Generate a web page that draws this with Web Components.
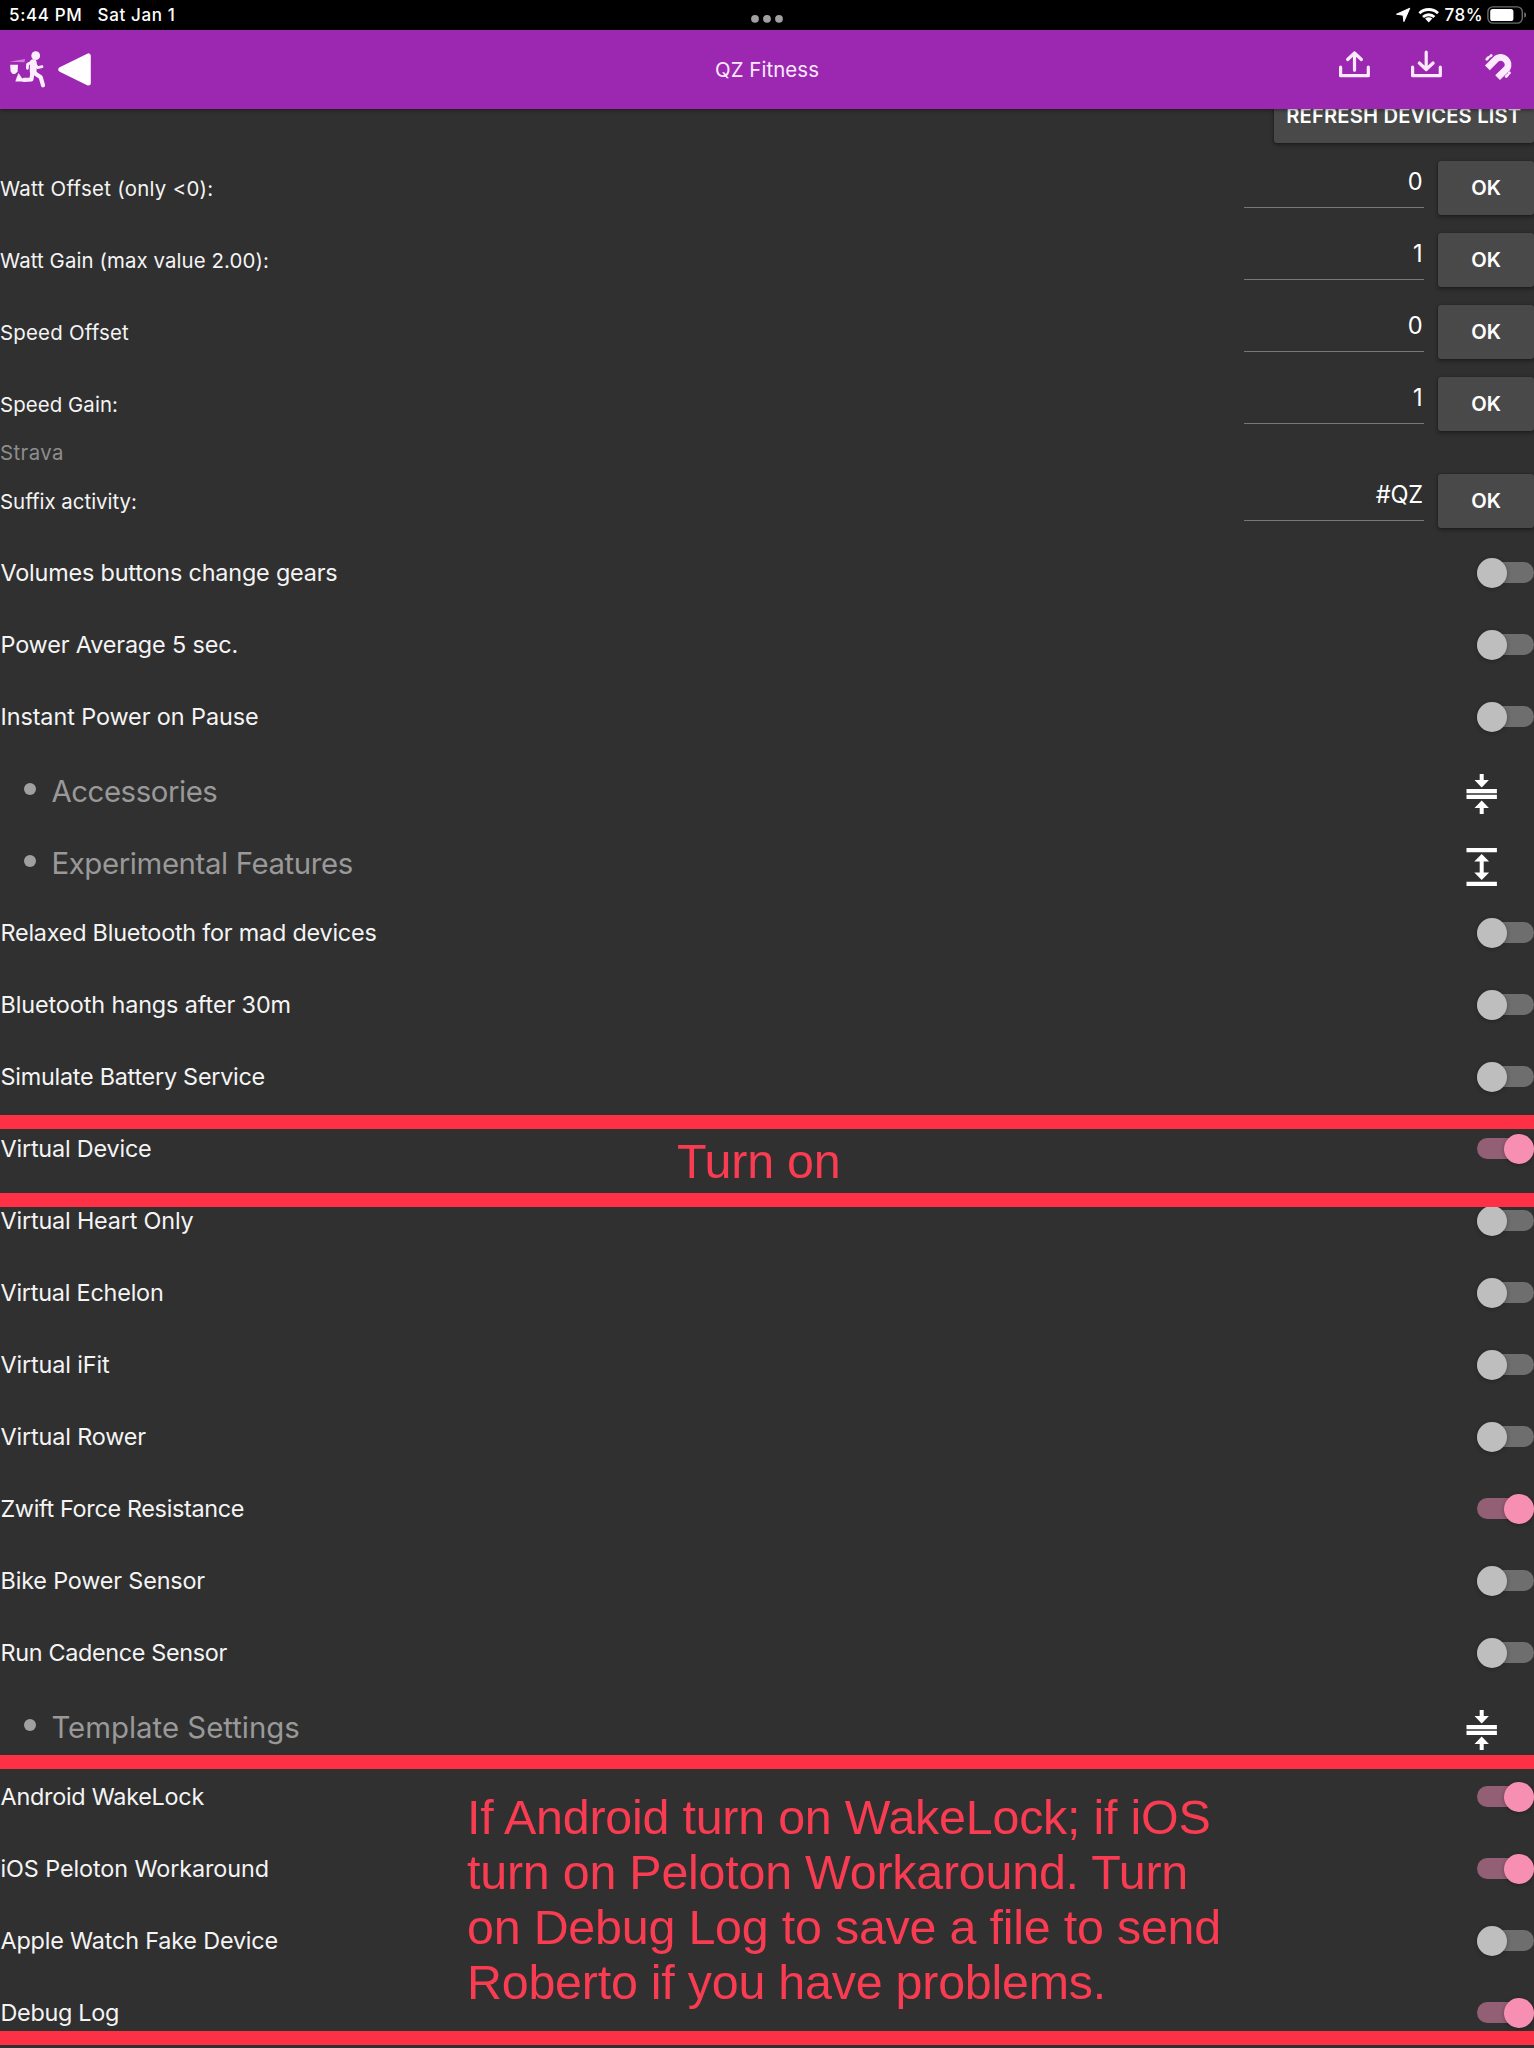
<!DOCTYPE html>
<html lang="en">
<head>
<meta charset="utf-8">
<title>QZ Fitness</title>
<style>
html,body{margin:0;background:#303030}
body{width:1534px;height:2048px;overflow:hidden;font-family:Inter,"Liberation Sans",sans-serif;color:#f4f4f4}
</style>
</head>
<body>
<qz-app></qz-app>
<script>
const define = (name, html, setup) => customElements.define(name, class extends HTMLElement {
  connectedCallback() {
    if (this.shadowRoot) return;
    const root = this.attachShadow({ mode: 'open' });
    root.innerHTML = html;
    if (setup) setup(this, root);
  }
});

/* Single line of text whose tracking is adjusted to a given advance width. */
define('fit-text', `<style>
  :host{display:block;white-space:nowrap;line-height:1.2}
  span{display:inline-block;white-space:pre}
</style><span></span>`, (el, root) => {
  const s = root.querySelector('span');
  const text = el.getAttribute('text');
  s.textContent = text;
  const w = parseFloat(el.getAttribute('w'));
  if (w) s.style.letterSpacing = ((w - s.getBoundingClientRect().width) / text.length).toFixed(4) + 'px';
});

define('status-bar', `<style>
  :host{display:flex;justify-content:space-between;height:30.3px;background:#000;color:#fff;font-size:17px;font-weight:500;position:relative;box-sizing:border-box;padding:0 8px 0 9px}
  .l{display:flex;gap:15px;padding-top:5px}
  .r{display:flex;align-items:flex-start}
  .r fit-text{margin:5px 4px 0 6px}
  svg{display:block}
  .dots{position:absolute;left:750px;top:14px}
</style>
<div class="l"><fit-text text="5:44 PM" w="73.5"></fit-text><fit-text text="Sat Jan 1" w="78"></fit-text></div>
<svg class="dots" width="34" height="10"><g fill="#a0a0a0"><circle cx="5" cy="4.8" r="3.9"/><circle cx="17" cy="4.8" r="3.9"/><circle cx="29" cy="4.8" r="3.9"/></g></svg>
<div class="r">
  <svg width="44" height="30" viewBox="1394.5 0 44 30"><path d="M1409.3 8.2 1396 14.2 1402.6 15.2 1403.4 21.6Z" fill="#fff" stroke="#fff" stroke-width="1" stroke-linejoin="round"/>
   <g fill="none" stroke="#fff" stroke-width="2.8"><path d="M1418.9 13.2a13.6 13.6 0 0 1 18.6 0"/><path d="M1422.5 17a8.4 8.4 0 0 1 11.4 0"/></g><path d="M1428.2 22.4l-3.6-3.8a5.2 5.2 0 0 1 7.2 0z" fill="#fff"/></svg>
  <fit-text text="78%" w="38.5"></fit-text>
  <svg width="39" height="30" viewBox="1487 0 39 30"><rect x="1487.9" y="6.9" width="34.4" height="16.2" rx="5" fill="none" stroke="#6c6c6c" stroke-width="1.4"/><rect x="1490.2" y="9" width="23.2" height="12" rx="2.6" fill="#fff"/><path d="M1524.3 12.3q2 .8 2 2.7t-2 2.7z" fill="#777"/></svg>
</div>`);

define('app-header', `<style>
  :host{display:grid;grid-template-columns:1fr auto 1fr;height:78.9px;background:#9c27b0;color:#fdeaff;position:relative;z-index:2;box-shadow:0 1px 4px rgba(0,0,0,.45)}
  svg{display:block}
  .r{justify-self:end}
  fit-text{font-size:20.4px;padding-top:28.2px}
</style>
<svg width="110" height="78.7" viewBox="0 30.3 110 78.7">
 <g fill="#fdeeff"><circle cx="35.7" cy="56" r="4.4"/>
  <path d="M10.2 65h7.8l-.4 7-2.6 2.2h-2.4l-2-2.4z"/><path d="M18.5 73.2l3.2 4.8 1.6 3.8h-8l1.4-4z"/>
 </g>
 <g fill="none" stroke="#fdeeff" stroke-linecap="round" stroke-linejoin="round">
  <path d="M33.3 63 33.2 72" stroke-width="6.8"/>
  <path d="M32 62.2 27.6 64.6 27.4 68.6" stroke-width="2.8"/>
  <path d="M34.5 63.5 37.7 68 42 67" stroke-width="2.8"/>
  <path d="M32.4 73.4 31.4 79.8 24 80.2" stroke-width="4.2"/>
  <path d="M34.4 73.4 40.7 77.6 43 85.6" stroke-width="4.2"/>
 </g>
 <path d="M9 62 25 59.3 24.5 62.6Z" fill="#e3a5ee" opacity=".7"/>
 <path d="M60.8 69.7 88.3 56.2V83.2Z" fill="#fff" stroke="#fff" stroke-width="5" stroke-linejoin="round"/>
</svg>
<fit-text text="QZ Fitness" w="104"></fit-text>
<svg class="r" width="214" height="78.7" viewBox="1320 29.8 214 78.7" fill="none" stroke="#fdeaff" stroke-width="3.2" stroke-linecap="round" stroke-linejoin="round">
 <path d="M1340.6 67V75.5H1368.3V67M1354.5 70V53M1347.6 59.3 1354.5 52.8 1361.4 59.3"/>
 <path d="M1412.6 67V75.5H1440.3V67M1426.2 52V69M1419.3 62.8 1426.2 69.3 1433.1 62.8"/>
 <path d="M1487.4 67.6 1496.6 58.4A7.4 7.4 0 0 1 1507.1 68.2L1497.6 77.4" stroke-width="6.8" stroke-linecap="butt"/>
 <path d="M1486.8 59l1.6-1.6M1491.2 55.3l-.6.5M1506.2 76.3l1.3-1.3M1509 73.2l.5-.6" stroke-width="2.8"/>
</svg>`);

define('qz-button', `<style>
  :host{display:flex;align-items:center;justify-content:center;box-sizing:border-box;height:54px;background:#494949;border-radius:3px;color:#fff;font-weight:560;font-size:20.2px;padding-top:1px;box-shadow:0 2px 4px rgba(0,0,0,.38),0 0 2px rgba(0,0,0,.3)}
</style>`, (el, root) => {
  const n = document.createElement('fit-text');
  n.setAttribute('text', el.getAttribute('text')); n.setAttribute('w', el.getAttribute('w'));
  root.append(n);
});

define('qz-switch', `<style>
  :host{display:flex;align-items:center;width:57px;height:21.6px;border-radius:11px;background:#6e6e6e}
  i{display:block;flex:none;width:30.2px;height:30.2px;border-radius:50%;background:#bebebe;box-shadow:0 1px 4px rgba(0,0,0,.3)}
  :host([on]){background:#935f74;justify-content:flex-end}
  :host([on]) i{background:#f78fb3}
</style><i></i>`);

define('input-row', `<style>
  :host{display:flex;align-items:center;height:72px}
  .label{flex:1;font-size:20.4px;padding-top:3.4px}
  .field{width:180px;height:41px;border-bottom:1.6px solid #777;margin:0 14.9px 0 0;display:flex;justify-content:flex-end;font-size:23.6px;box-sizing:border-box;color:#fff}
  .field fit-text{padding-top:1px;margin-right:.8px}
  qz-button{width:95.6px}
</style><div class="label"></div><div class="field"></div><qz-button text="OK" w="30"></qz-button>`, (el, root) => {
  root.querySelector('.label').innerHTML = `<fit-text text="${el.getAttribute('label').replace('<','&lt;')}" w="${el.getAttribute('w')-1}"></fit-text>`;
  root.querySelector('.field').innerHTML = `<fit-text text="${el.getAttribute('value')}" w="${el.getAttribute('vw')||''}"></fit-text>`;
});

define('switch-row', `<style>
  :host{display:flex;align-items:center;justify-content:space-between;height:72px;font-size:23.4px}
  .label{padding:.6px 0 0 .5px}
</style><div class="label"></div><qz-switch></qz-switch>`, (el, root) => {
  root.querySelector('.label').innerHTML = `<fit-text text="${el.getAttribute('label')}" w="${el.getAttribute('w')-1.5}"></fit-text>`;
  if (el.hasAttribute('on')) root.querySelector('qz-switch').setAttribute('on', '');
});

define('section-row', `<style>
  :host{display:flex;align-items:center;height:72px;color:#999;font-size:29.4px;box-sizing:border-box;padding:0 36px 0 24px}
  .dot{width:12px;height:12px;border-radius:50%;background:#a0a0a0;margin:1px 15.4px 0 0}
  .label{flex:1;padding-top:5.4px}
  svg{display:block;margin-top:10.6px}
  :host([open]) svg{margin-top:12px}
</style><div class="dot"></div><div class="label"></div><svg width="32" height="42" viewBox="-15.7 -21 32 42" fill="#fff"></svg>`, (el, root) => {
  root.querySelector('.label').innerHTML = `<fit-text text="${el.getAttribute('label')}" w="${el.getAttribute('w')-1.5}"></fit-text>`;
  root.querySelector('svg').innerHTML = el.hasAttribute('open')
    ? '<path d="M-15.2-19h30.4v4.2h-30.4zM-15.2 14.8h30.4V19h-30.4zM0-13 7.4-5.6H2V5.6H7.4L0 13-7.4 5.6H-2V-5.6H-7.4Z"/>'
    : '<path d="M-15.2-5.1h30.4v4.3h-30.4zM-15.2.8h30.4v4.3h-30.4zM-2-20H2V-14H7.2L0-6.6-7.2-14H-2ZM-2 20H2V14H7.2L0 6.6-7.2 14H-2Z"/>';
});

/* Hand-made annotation: a band between two thick rules with a comment in it. */
define('note-band', `<style>
  :host{position:absolute;left:0;width:1534px;box-sizing:border-box;border:solid #fe3046;border-width:14.2px 0;color:#f93c51;font-family:"Liberation Sans",Arial,sans-serif;font-size:48.4px;z-index:1}
</style><slot></slot>`);

define('qz-app', `<style>
  :host{display:flex;flex-direction:column;position:relative;width:1534px;height:2048px;overflow:hidden;background:#303030}
  main{display:flex;flex-direction:column;margin-top:-29.2px}
  main>*{flex:none}
  .refresh{display:flex;justify-content:flex-end;align-items:center;height:72px}
  .refresh qz-button{width:260.5px}
  .strava{height:25.1px;display:flex;align-items:center;font-size:20.4px;color:#8d8d8d}
  .strava fit-text{padding-top:2px}
  .a{top:1114.7px;height:92.8px}
  .b{top:1755px;height:290.4px}
  .a fit-text{margin-left:677px;line-height:55.2px;padding-top:5.6px}
  .b fit-text{margin-left:467px;line-height:55.2px}
  .b .first{padding-top:20.6px}
</style>
<status-bar></status-bar>
<app-header></app-header>
<main>
 <div class="refresh"><qz-button text="REFRESH DEVICES LIST" w="235"></qz-button></div>
 <input-row label="Watt Offset (only <0):" w="214.5" value="0"></input-row>
 <input-row label="Watt Gain (max value 2.00):" w="270" value="1"></input-row>
 <input-row label="Speed Offset" w="130" value="0"></input-row>
 <input-row label="Speed Gain:" w="119" value="1"></input-row>
 <div class="strava"><fit-text text="Strava" w="64"></fit-text></div>
 <input-row label="Suffix activity:" w="138" value="#QZ" vw="47"></input-row>
 <switch-row label="Volumes buttons change gears" w="338.5"></switch-row>
 <switch-row label="Power Average 5 sec." w="239"></switch-row>
 <switch-row label="Instant Power on Pause" w="259.5"></switch-row>
 <section-row label="Accessories" w="167.5"></section-row>
 <section-row label="Experimental Features" w="303" open></section-row>
 <switch-row label="Relaxed Bluetooth for mad devices" w="377.5"></switch-row>
 <switch-row label="Bluetooth hangs after 30m" w="292"></switch-row>
 <switch-row label="Simulate Battery Service" w="266"></switch-row>
 <switch-row label="Virtual Device" w="152.5" on></switch-row>
 <switch-row label="Virtual Heart Only" w="194.5"></switch-row>
 <switch-row label="Virtual Echelon" w="164.5"></switch-row>
 <switch-row label="Virtual iFit" w="110.5"></switch-row>
 <switch-row label="Virtual Rower" w="147"></switch-row>
 <switch-row label="Zwift Force Resistance" w="245" on></switch-row>
 <switch-row label="Bike Power Sensor" w="206"></switch-row>
 <switch-row label="Run Cadence Sensor" w="228"></switch-row>
 <section-row label="Template Settings" w="250"></section-row>
 <switch-row label="Android WakeLock" w="205" on></switch-row>
 <switch-row label="iOS Peloton Workaround" w="270" on></switch-row>
 <switch-row label="Apple Watch Fake Device" w="279"></switch-row>
 <switch-row label="Debug Log" w="120" on></switch-row>
</main>
<note-band class="a"><fit-text text="Turn on" w="163.5"></fit-text></note-band>
<note-band class="b"><fit-text class="first" text="If Android turn on WakeLock; if iOS" w="743.5"></fit-text><fit-text text="turn on Peloton Workaround. Turn" w="721"></fit-text><fit-text text="on Debug Log to save a file to send" w="754"></fit-text><fit-text text="Roberto if you have problems." w="639"></fit-text></note-band>`);
</script>
</body>
</html>
